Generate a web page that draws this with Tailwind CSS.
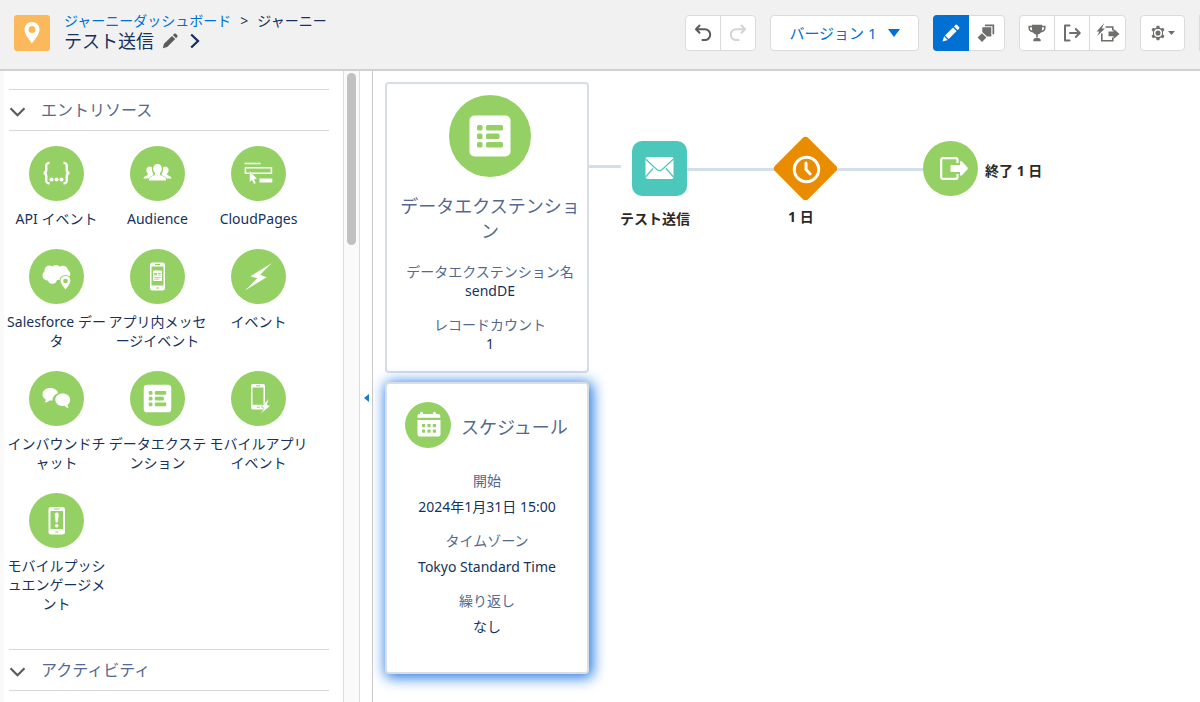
<!DOCTYPE html>
<html lang="ja">
<head>
    <meta charset="UTF-8">
    <meta name="viewport" content="width=device-width, initial-scale=1.0">
    <title>ジャーニー - テスト送信</title>
    <script src="https://cdn.jsdelivr.net/npm/@tailwindcss/browser@4"></script>
</head>
<body class="h-screen flex flex-col overflow-hidden bg-white text-[#16325c] text-sm font-['Noto_Sans','Noto_Sans_CJK_JP',sans-serif]">

    <!-- Header -->
    <header class="flex items-end justify-between shrink-0 bg-[#f1f1f1] border-b-2 border-[#d0d0d0] pt-[11px] pb-[18px] pl-[14px] overflow-hidden">
        <div class="flex items-end gap-[14px]">
            <svg class="w-9 h-9" viewBox="0 0 36 36" aria-hidden="true">
                <rect width="36" height="36" rx="3" fill="#fcb95b"/>
                <path d="M18 7c-4.400 0-7.500 3.300-7.500 7.600 0 5 4.500 9.400 7.500 13.900 3-4.500 7.500-8.900 7.500-13.900C25.500 10.300 22.400 7 18 7zm0 11a3.500 3.500 0 1 1 0-7 3.500 3.500 0 0 1 0 7z" fill="#fff"/>
            </svg>
            <div class="leading-5">
                <nav class="flex gap-[9px] whitespace-nowrap">
                    <a href="#" class="text-[#0070d2]">ジャーニーダッシュボード</a>
                    <span>&gt;</span>
                    <span>ジャーニー</span>
                </nav>
                <div class="flex items-center gap-2">
                    <h1 class="text-lg leading-5">テスト送信</h1>
                    <button aria-label="名前を編集">
                        <svg class="w-4 h-4" viewBox="0 0 16 16" fill="#5c5b5a"><path d="M.8 15.200l1.200-4.400L10 2.900l3.200 3.200-8 7.900zM10.900 2l1.300-1.200q.8-.7 1.600 0l1.500 1.500q.7.800 0 1.500L14.100 5.200z"/></svg>
                    </button>
                    <button aria-label="詳細" class="ml-1">
                        <svg class="w-[10px] h-4" viewBox="0 0 10 16" fill="none" stroke="#16325c" stroke-width="2.300"><path d="M1.200 1.500L8 8l-6.800 6.500"/></svg>
                    </button>
                </div>
            </div>
        </div>

        <div class="flex gap-[14px] shrink-0">
            <div class="flex rounded border border-[#dddbda] bg-white overflow-hidden divide-x divide-[#dddbda]">
                <button aria-label="元に戻す" class="w-[35px] h-[34px] grid place-items-center">
                    <svg class="w-[18px] h-[18px]" viewBox="0 0 18 18" fill="none" stroke="#5c5b5a" stroke-width="2" stroke-linecap="round" stroke-linejoin="round"><path d="M5.500 1.500L2 5.200l3.500 3.500M2.300 5.200h8.500a5.300 5.300 0 0 1 0 10.800H8.500"/></svg>
                </button>
                <button aria-label="やり直す" disabled class="w-[34px] h-[34px] grid place-items-center">
                    <svg class="w-[18px] h-[18px]" viewBox="0 0 18 18" fill="none" stroke="#d6d4d3" stroke-width="2" stroke-linecap="round" stroke-linejoin="round"><path d="M12.500 1.500L16 5.200l-3.500 3.500M15.700 5.200H7.200a5.300 5.300 0 0 0 0 10.800h2.300"/></svg>
                </button>
            </div>

            <button class="flex items-center justify-center gap-[11px] w-[149px] h-9 rounded border border-[#dddbda] bg-white text-[#0070d2] text-[15px] leading-5">
                バージョン 1
                <svg class="w-3 h-2" viewBox="0 0 12 8" fill="#0070d2"><path d="M0 0h12L6 8z"/></svg>
            </button>

            <div class="flex rounded border border-[#dddbda] bg-white">
                <button aria-label="編集" class="-m-px w-9 h-9 grid place-items-center rounded-l bg-[#0070d2]">
                    <svg class="w-[18px] h-[18px]" viewBox="0 0 18 18" fill="#fff"><path d="M.5 17.500l1.600-5.200 3.700 3.600zM3 11.400l8-8 3.700 3.700-8 8zM12 2.400l1.400-1.400q.8-.8 1.700 0l2 2q.8.900 0 1.700l-1.400 1.400z"/></svg>
                </button>
                <button aria-label="テスト" class="w-[36px] h-[34px] grid place-items-center">
                    <svg class="w-[18px] h-[18px]" viewBox="0 0 18 18" fill="#706e6b"><path d="M8 .5h9.200v9.700h-1.700V2.200H8zM5.300 3.300h9v9.200H10L5.300 8zM5 9.300l4.400 4.300L5 18 .6 13.600z"/></svg>
                </button>
            </div>

            <div class="flex rounded border border-[#dddbda] bg-white divide-x divide-[#dddbda]">
                <button aria-label="目標" class="w-[35px] h-[34px] grid place-items-center">
                    <svg class="w-[18px] h-[18px]" viewBox="0 0 18 18"><path d="M4.500 2.500H1.200v1.600c0 2.200 1.500 3.400 4 3.600M13.500 2.500h3.300v1.600c0 2.200-1.500 3.400-4 3.600" fill="none" stroke="#706e6b" stroke-width="1.500"/><path d="M4 .8h10v4.500c0 3-2 4.900-4.200 5.200v2.800H8.200v-2.800C6 10.200 4 8.300 4 5.300zM5.300 16.500q0-2.700 3.700-2.700t3.700 2.700v.7H5.300z" fill="#706e6b"/></svg>
                </button>
                <button aria-label="終了条件" class="w-[35px] h-[34px] grid place-items-center">
                    <svg class="w-[18px] h-[18px]" viewBox="0 0 18 18" fill="none" stroke="#706e6b" stroke-width="2" stroke-linecap="round" stroke-linejoin="round"><path d="M6.500 1.500H2v15h4.500M7 9h9.500M12.800 5l3.900 4-3.900 4"/></svg>
                </button>
                <button aria-label="即時終了" class="w-[35px] h-[34px] grid place-items-center">
                    <svg class="w-6 h-5" viewBox="0 0 24 20"><path d="M9.500 4h7.300v3.500M5.800 10.500v7.300h11v-3.300" fill="none" stroke="#706e6b" stroke-width="1.600"/><path d="M8.200 0L.6 8.500h2.700L1.200 13 9 5.500H5.800zM12.500 8.500h5V5.700l6 5.300-6 5v-2.700h-5z" fill="#706e6b"/></svg>
                </button>
            </div>

            <button aria-label="設定" class="flex items-center justify-center gap-[2px] w-[45px] h-9 rounded border border-[#dddbda] bg-white">
                <svg class="w-4 h-4" viewBox="1 0 14 16"><path d="M6.700.8h2.600l.5 2 1.300.7 2-.8 1.400 2.300-1.500 1.500v3l1.500 1.500-1.400 2.300-2-.8-1.300.7-.5 2H6.700l-.5-2-1.300-.7-2 .8L1.500 11 3 9.500v-3L1.500 5l1.400-2.300 2 .8 1.300-.7z" fill="#706e6b"/><circle cx="8" cy="8" r="3.300" fill="none" stroke="#fff" stroke-width="1.500"/></svg>
                <svg class="w-[7px] h-1" viewBox="0 0 7 4" fill="#706e6b"><path d="M0 0h7L3.500 4z"/></svg>
            </button>
            <div class="w-px h-9 bg-[#dddbda]"></div>
        </div>
    </header>

    <div class="flex flex-1 min-h-0">

        <!-- Palette -->
        <aside class="w-[343px] shrink-0 overflow-hidden border-l-4 border-[#fafafa] pl-[5px] pr-[14px] pt-[18px]">
            <h2 class="border-y border-[#d8d8d8]">
                <button class="flex items-center gap-[15px] w-full h-10 text-base text-[#54698d]">
                    <svg class="w-[17px] h-[10px] mt-1" viewBox="0 0 17 10" fill="none" stroke="#5c5b5a" stroke-width="2.200"><path d="M1.500 1.200l7 7 7-7"/></svg>
                    エントリソース
                </button>
            </h2>
            <ul class="grid grid-cols-[repeat(3,101px)] -ml-[3px] mt-[15px] gap-y-[21px] text-center leading-[19px]">
                <li class="flex flex-col items-center gap-2">
                    <svg class="w-[55px] h-[55px]" viewBox="0 0 55 55"><circle cx="27.500" cy="27.500" r="27.500" fill="#95d064"/><g fill="none" stroke="#fff" stroke-width="2.400"><path d="M20.500 17c-3 0-3.300 1-3.300 3.500v3.600c0 2-.7 3-2.700 3 2 0 2.700 1 2.700 3v3.600c0 2.500.3 3.500 3.300 3.500M34.500 17c3 0 3.300 1 3.300 3.500v3.600c0 2 .7 3 2.700 3-2 0-2.700 1-2.700 3v3.600c0 2.500-.3 3.500-3.300 3.500"/></g><g fill="#fff"><circle cx="22.500" cy="33.500" r="2"/><circle cx="27.500" cy="33.500" r="2"/><circle cx="32.500" cy="33.500" r="2"/></g></svg>
                    API イベント
                </li>
                <li class="flex flex-col items-center gap-2">
                    <svg class="w-[55px] h-[55px]" viewBox="0 0 55 55"><circle cx="27.500" cy="27.500" r="27.500" fill="#95d064"/><g fill="#fff"><path d="M27.500 18c-2.600 0-4.300 1.800-4.300 4.500 0 2 .7 3.600 1.900 4.700.2 1.600-.3 1.900-2.400 2.800-2.300 1-3.700 1.800-3.700 3.500v1.100h17v-1.100c0-1.700-1.400-2.500-3.700-3.500-2.100-.9-2.600-1.200-2.400-2.800 1.200-1.100 1.900-2.700 1.900-4.700 0-2.700-1.700-4.500-4.300-4.500z"/><path d="M22 21.200c-2.300-1.800-5.600-.4-5.600 2.800 0 1.600.6 2.800 1.500 3.600.1 1.200-.2 1.500-1.600 2.100-1.900.8-2.800 1.400-2.800 2.800h5c.8-1.400 2.200-2.300 4.200-3.100.7-.3.800-.5.700-1.300-1.300-1.900-1.700-4.400-1.400-6.900zM33 21.200c2.300-1.800 5.600-.4 5.600 2.800 0 1.600-.6 2.800-1.500 3.600-.1 1.200.2 1.500 1.600 2.100 1.900.8 2.800 1.400 2.800 2.800h-5c-.8-1.400-2.200-2.300-4.200-3.100-.7-.3-.8-.5-.7-1.300 1.300-1.900 1.700-4.400 1.400-6.900z"/></g></svg>
                    Audience
                </li>
                <li class="flex flex-col items-center gap-2">
                    <svg class="w-[55px] h-[55px]" viewBox="0 0 55 55"><circle cx="27.500" cy="27.500" r="27.500" fill="#95d064"/><path d="M13.500 17.500h16" stroke="#fff" stroke-width="1.600"/><path d="M14.400 21.800h26v5.400h-26z" fill="none" stroke="#fff" stroke-width="1.600"/><path d="M28.500 32.500h12.800v4H28.500z" fill="#fff"/><path d="M18.300 24.500l.2 11.800 2.600-2 1.700 4 2.300-1-1.800-3.900 3-.6z" fill="#fff" stroke="#95d064" stroke-width=".6"/></svg>
                    CloudPages
                </li>
                <li class="flex flex-col items-center gap-2">
                    <svg class="w-[55px] h-[55px]" viewBox="0 0 55 55"><circle cx="27.500" cy="27.500" r="27.500" fill="#95d064"/><g fill="#fff"><circle cx="20.500" cy="21.500" r="5"/><circle cx="27" cy="20.500" r="4.500"/><circle cx="34" cy="21.800" r="5"/><circle cx="36.800" cy="25" r="4.500"/><circle cx="18.500" cy="26.500" r="5"/><circle cx="23.300" cy="30" r="4.800"/><path d="M20 20h15v11H20z"/></g><path d="M36.500 26.500c-3.300 0-5.500 2.300-5.500 5.300 0 3.600 3.600 6.500 5.500 9.700 1.900-3.200 5.500-6.100 5.500-9.700 0-3-2.200-5.300-5.500-5.300z" fill="#fff" stroke="#95d064" stroke-width="1.200"/><circle cx="36.500" cy="32" r="2.300" fill="#95d064"/></svg>
                    Salesforce データ
                </li>
                <li class="flex flex-col items-center gap-2">
                    <svg class="w-[55px] h-[55px]" viewBox="0 0 55 55"><circle cx="27.500" cy="27.500" r="27.500" fill="#95d064"/><rect x="20" y="13.500" width="15" height="28" rx="2.500" fill="#fff"/><path d="M21.500 17.500h12v19h-12z" fill="#95d064"/><path d="M25 15.500h5M26 39h3" stroke="#95d064"/><rect x="23" y="21.500" width="9" height="10.500" rx=".8" fill="#fff"/><path d="M24.300 24h2.500v2.300h-2.500zM28 24h2.800v.9H28zM28 25.800h2.800v.8H28zM24.300 28h6.400v.8h-6.400zM24.300 29.800h5v.8h-5z" fill="#95d064"/></svg>
                    アプリ内メッセージイベント
                </li>
                <li class="flex flex-col items-center gap-2">
                    <svg class="w-[55px] h-[55px]" viewBox="0 0 55 55"><circle cx="27.500" cy="27.500" r="27.500" fill="#95d064"/><path d="M41 14L19.500 27.200l6.800 2.100L14 41.500l21.500-13.200-6.500-2.500z" fill="#fff"/></svg>
                    イベント
                </li>
                <li class="flex flex-col items-center gap-2">
                    <svg class="w-[55px] h-[55px]" viewBox="0 0 55 55"><circle cx="27.500" cy="27.500" r="27.500" fill="#95d064"/><path d="M21.200 17c-4.300 0-7.700 2.700-7.700 6.300 0 2.200 1.100 4 3.200 5.200.1 1.300-.3 2.100-1.200 3 2.200 0 3.700-.8 4.800-2 .9.100 2.100.1 3 0 .4-4.100 2.500-6.200 5.700-7.300-.5-3-3.500-5.200-7.800-5.200zM33.500 22.600c-4 0-7.200 2.700-7.200 6.200s3.200 6.200 7.200 6.200c.8 0 1.300 0 1.900-.2 1.100 1.300 2.500 2 4.400 2.200-.8-1-1.200-2-1.100-3.200 1.600-1.200 2.500-2.900 2.500-5 0-3.500-3.400-6.200-7.700-6.200z" fill="#fff"/></svg>
                    インバウンドチャット
                </li>
                <li class="flex flex-col items-center gap-2">
                    <svg class="w-[55px] h-[55px]" viewBox="0 0 82 82"><circle cx="41" cy="41" r="41" fill="#95d064"/><rect x="20.500" y="20.500" width="41" height="41" rx="5" fill="#fff"/><g fill="#95d064"><rect x="28" y="30" width="5.500" height="5.500" rx="1.500"/><rect x="37" y="30" width="17" height="5.500" rx="1.500"/><rect x="28" y="38.500" width="5.500" height="5.500" rx="1.500"/><rect x="37" y="38.500" width="13.500" height="5.500" rx="1.500"/><rect x="28" y="47" width="5.500" height="5.500" rx="1.500"/><rect x="37" y="47" width="17" height="5.500" rx="1.500"/></g></svg>
                    データエクステンション
                </li>
                <li class="flex flex-col items-center gap-2">
                    <svg class="w-[55px] h-[55px]" viewBox="0 0 55 55"><circle cx="27.500" cy="27.500" r="27.500" fill="#95d064"/><rect x="20" y="13" width="14" height="25.500" rx="2" fill="#fff"/><path d="M21.500 16.500h11v17.300h-11z" fill="#95d064"/><path d="M25 14.800h4M25.800 36.200h2.800" stroke="#95d064"/><path d="M38 27.500l-8 8.500 3.200.9-4 6.400 10.200-8.600-3.300-1z" fill="#fff" stroke="#95d064" stroke-width=".6"/></svg>
                    モバイルアプリイベント
                </li>
                <li class="flex flex-col items-center gap-2">
                    <svg class="w-[55px] h-[55px]" viewBox="0 0 55 55"><circle cx="27.500" cy="27.500" r="27.500" fill="#95d064"/><rect x="19.500" y="14" width="16.500" height="27.500" rx="2.500" fill="#fff"/><path d="M21.500 18h12.500v18H21.500z" fill="#95d064"/><path d="M25 16h5.500M26.200 39h3" stroke="#95d064"/><path d="M27.700 19.500c-1.700 0-2.200 1-2 2.500l1 7.500h2l1-7.500c.2-1.500-.3-2.500-2-2.500z" fill="#fff"/><circle cx="27.700" cy="32.700" r="1.800" fill="#fff"/></svg>
                    モバイルプッシュエンゲージメント
                </li>
            </ul>
            <h2 class="mt-9 border-y border-[#d8d8d8]">
                <button class="flex items-center gap-[15px] w-full h-10 text-base text-[#54698d]">
                    <svg class="w-[17px] h-[10px] mt-1" viewBox="0 0 17 10" fill="none" stroke="#5c5b5a" stroke-width="2.200"><path d="M1.500 1.200l7 7 7-7"/></svg>
                    アクティビティ
                </button>
            </h2>
        </aside>

        <!-- Scrollbar -->
        <div class="w-[17px] shrink-0 border-x border-[#dcdcdc] bg-[#fafafa] pt-[2px]">
            <div class="w-[9px] h-[172px] mx-auto rounded-full bg-[#c1c1c1]"></div>
        </div>

        <!-- Collapse handle -->
        <button aria-label="パネルを閉じる" class="w-[13px] shrink-0 grid place-items-center border-r border-[#c9c9c9] pt-[22px]">
            <svg class="w-[5px] h-2" viewBox="0 0 5 8" fill="#1b79c9"><path d="M5 0v8L0 4z"/></svg>
        </button>

        <!-- Canvas -->
        <main class="relative flex-1 min-w-0 overflow-hidden pt-[11px] pl-3">
            <div class="flex flex-col gap-[9px] w-[204px] text-center">
                <section class="rounded border-2 border-[#d8dde6] bg-white pt-[11px] pb-[18px] pl-[10px] pr-1">
                    <svg class="w-[82px] h-[82px] mx-auto" viewBox="0 0 82 82"><circle cx="41" cy="41" r="41" fill="#95d064"/><rect x="20.500" y="20.500" width="41" height="41" rx="5" fill="#fff"/><g fill="#95d064"><rect x="28" y="30" width="5.500" height="5.500" rx="1.500"/><rect x="37" y="30" width="17" height="5.500" rx="1.500"/><rect x="28" y="38.500" width="5.500" height="5.500" rx="1.500"/><rect x="37" y="38.500" width="13.500" height="5.500" rx="1.500"/><rect x="28" y="47" width="5.500" height="5.500" rx="1.500"/><rect x="37" y="47" width="17" height="5.500" rx="1.500"/></g></svg>
                    <h3 class="mt-[17px] text-lg leading-[25px] text-[#54698d]">データエクステンション</h3>
                    <dl class="mt-[18px] leading-[19px]">
                        <dt class="text-[#54698d]">データエクステンション名</dt>
                        <dd>sendDE</dd>
                        <dt class="mt-[15px] text-[#54698d]">レコードカウント</dt>
                        <dd>1</dd>
                    </dl>
                </section>

                <section class="rounded border-2 border-[#d8dde6] bg-white pt-[18px] pb-8 shadow-[2px_2px_14px_2px_#2a7de1]">
                    <div class="flex items-end gap-[10px] pl-[18px]">
                        <svg class="w-[46px] h-[46px]" viewBox="0 0 46 46"><circle cx="23" cy="23" r="23" fill="#95d064"/><path d="M15 11.300q0-1.600 1.500-1.600t1.500 1.600V12h10v-.7q0-1.600 1.500-1.600t1.500 1.600V12h2.300q2 0 2 2v1.800H12.500V14q0-2 2-2h.5zM12.500 18h23v14.500q0 2-2 2h-19q-2 0-2-2z" fill="#fff"/><g fill="#95d064"><rect x="17" y="22" width="3.200" height="3.200" rx=".6"/><rect x="22.400" y="22" width="3.200" height="3.200" rx=".6"/><rect x="27.800" y="22" width="3.200" height="3.200" rx=".6"/><rect x="17" y="27.500" width="3.200" height="3.200" rx=".6"/><rect x="22.400" y="27.500" width="3.200" height="3.200" rx=".6"/><rect x="27.800" y="27.500" width="3.200" height="3.200" rx=".6"/></g></svg>
                        <h3 class="pb-2 text-lg leading-[25px] text-[#54698d]">スケジュール</h3>
                    </div>
                    <dl class="mt-5 leading-[26px]">
                        <dt class="text-[#54698d]">開始</dt>
                        <dd>2024年1月31日 15:00</dd>
                        <dt class="mt-2 text-[#54698d]">タイムゾーン</dt>
                        <dd>Tokyo Standard Time</dd>
                        <dt class="mt-2 text-[#54698d]">繰り返し</dt>
                        <dd>なし</dd>
                    </dl>
                </section>
            </div>

            <!-- Journey nodes -->
            <div class="absolute left-[216px] top-[94px] w-8 h-[3px] bg-[#d3dfec]"></div>
            <div class="absolute left-[314px] top-[97px] w-[240px] h-[3px] bg-[#d3dfec]"></div>

            <div class="absolute left-[242px] top-[70px] w-20 flex flex-col items-center gap-[13px] text-[#2b2826] font-bold leading-5 whitespace-nowrap">
                <svg class="w-[55px] h-[55px] ml-2" viewBox="0 0 55 55"><rect width="55" height="55" rx="10" fill="#4bc7bc"/><rect x="13.500" y="16" width="28" height="22" rx="2" fill="#fff"/><path d="M13.500 18l11.300 10.500q2.700 2.300 5.400 0L41.500 18M13.500 36l7.500-8.500M41.500 36L34 27.500" fill="none" stroke="#4bc7bc" stroke-width="1.200"/></svg>
                テスト送信
            </div>

            <div class="absolute left-[400px] top-[65px] flex flex-col items-start gap-[7px] text-[#2b2826] font-bold leading-5">
                <svg class="w-16 h-16" viewBox="0 0 64 64"><rect x="9" y="9" width="47" height="47" rx="4" transform="rotate(45 32.500 32.500)" fill="#ea8c00"/><circle cx="33.500" cy="33.500" r="12.200" fill="none" stroke="#fff" stroke-width="3"/><path d="M33 27v6.500l4.200 4.500" fill="none" stroke="#fff" stroke-width="3" stroke-linecap="round"/></svg>
                <span class="pl-[15px]">1 日</span>
            </div>

            <div class="absolute left-[550px] top-[70px] flex items-center gap-[7px] text-[#2b2826] font-bold leading-5 whitespace-nowrap">
                <svg class="w-[55px] h-[55px]" viewBox="0 0 55 55"><circle cx="27.500" cy="27.500" r="27.500" fill="#95d064"/><path d="M34.500 22v-3q0-1.800-1.800-1.800H20q-1.800 0-1.800 1.800v17q0 1.800 1.800 1.800h12.700q1.800 0 1.800-1.800v-3" fill="none" stroke="#fff" stroke-width="2.200"/><path d="M28.500 24h8.500v-3.500q1-.8 2 0l5.500 6q.7.900 0 1.800l-5.500 6q-1 .8-2 0V31h-8.500q-1 0-1-1v-5q0-1 1-1z" fill="#fff"/></svg>
                <span class="mt-1">終了 1 日</span>
            </div>
        </main>
    </div>
</body>
</html>
